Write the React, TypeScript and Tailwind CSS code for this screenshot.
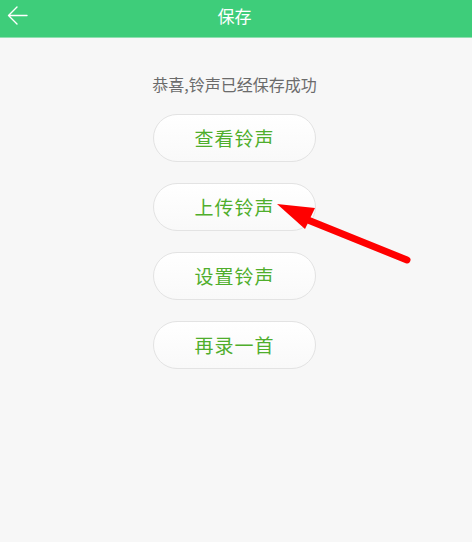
import React from "react";

const font = { fontFamily: '"Noto Sans CJK SC", "Noto Sans", sans-serif' };

export default function App() {
  const buttons = ["查看铃声", "上传铃声", "设置铃声", "再录一首"];
  return (
    <div className="relative w-[472px] h-[542px] bg-[#f7f7f7] overflow-hidden" style={font}>
      <div className="relative h-[38px] bg-[#3ecd7a] flex items-center justify-center pr-[3px] border-b border-[#8fe0b0]">
        <svg className="absolute left-[6px] top-[5px]" width="24" height="22" viewBox="0 0 24 22" fill="none">
          <path d="M21 10.5 H2.5 M11 2 L2.5 10.5 L11 19" stroke="white" strokeWidth="1.4" strokeLinecap="round" strokeLinejoin="round" />
        </svg>
        <span className="text-white text-[17px] leading-none -mt-[6px]">保存</span>
      </div>
      <div className="flex flex-col items-center pr-[3px]">
        <div className="mt-[35px] text-[16px] leading-[22px] text-[#6b6b6b]">恭喜,铃声已经保存成功</div>
        <div className="mt-[19px] flex flex-col gap-[21px]">
          {buttons.map((b) => (
            <div
              key={b}
              className="w-[163px] h-[48px] rounded-full border border-[#e3e3e3] bg-gradient-to-b from-white to-[#f9f9f9] flex items-center justify-center text-[19px] text-[#4fae2c] tracking-[1px]"
            >
              {b}
            </div>
          ))}
        </div>
      </div>
      <svg className="absolute left-0 top-0" width="472" height="542" viewBox="0 0 472 542">
        <line x1="303" y1="218" x2="407" y2="260" stroke="#ff0000" strokeWidth="7" strokeLinecap="round" />
        <polygon points="277,204 315,208 305,229" fill="#ff0000" />
      </svg>
    </div>
  );
}
